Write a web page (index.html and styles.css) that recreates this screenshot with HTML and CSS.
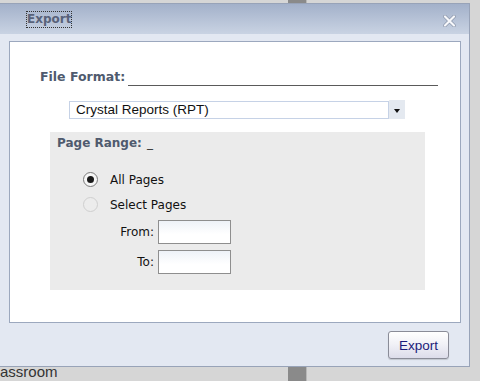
FILE: index.html
```html
<!DOCTYPE html>
<html lang="en">
<head>
  <meta charset="UTF-8" />
  <title>Export</title>
  <link rel="stylesheet" href="styles.css">
</head>
<body>
  <div class="desk">
    <div class="desk-bar"></div>
    <div class="desk-text">assroom</div>

    <div class="dialog">
      <div class="titlebar">
        <span class="title">Export</span>
        <svg class="close" width="13" height="12" viewBox="0 0 13 12">
          <path d="M2 1.5 L11 10.5 M11 1.5 L2 10.5" stroke="#8c97ab" stroke-width="3.6" stroke-linecap="round" />
          <path d="M2 1.5 L11 10.5 M11 1.5 L2 10.5" stroke="#f7f8fb" stroke-width="2.2" stroke-linecap="round" />
        </svg>
      </div>
      <div class="dialog-body">
        <div class="panel">
          <div class="format-row">
            <span class="label">File Format:</span>
            <span class="rule"></span>
          </div>
          <div class="combo">
            <div class="combo-text">Crystal Reports (RPT)</div>
            <div class="combo-btn"><span class="arrow"></span></div>
          </div>
          <div class="range">
            <div class="range-head"><span class="label">Page Range:</span> <span class="blank">_</span></div>
            <div class="options">
              <label class="opt"><span class="radio on"></span>All Pages</label>
              <label class="opt off"><span class="radio"></span>Select Pages</label>
              <div class="field first"><span class="field-label">From:</span><span class="box"></span></div>
              <div class="field"><span class="field-label">To:</span><span class="box"></span></div>
            </div>
          </div>
        </div>
        <div class="actions">
          <button class="btn">Export</button>
        </div>
      </div>
    </div>
  </div>
</body>
</html>
```

FILE: styles.css
```css
body {
  margin: 0;
  background: #d6d6d6;
  font-family: "DejaVu Sans", Verdana, sans-serif;
}
.desk {
  position: relative;
  width: 480px;
  height: 381px;
  overflow: hidden;
  background: #d6d6d6;
}
.desk-bar {
  position: absolute;
  left: 288px;
  top: 0;
  width: 18px;
  height: 381px;
  background: #8a8a8a;
  border-right: 1px solid #b8b8b8;
}
.desk-text {
  position: absolute;
  left: 0;
  top: 364px;
  font-family: "Liberation Sans", Arial, sans-serif;
  font-size: 15px;
  line-height: 16px;
  color: #333;
}
.dialog {
  position: absolute;
  left: -1px;
  top: 3px;
  width: 469px;
  height: 362px;
  border: 1px solid #98a3b8;
  background: #e3e8f2;
  display: flex;
  flex-direction: column;
}
.titlebar {
  height: 30px;
  flex: none;
  background: linear-gradient(#a3b1ca, #c9d3e3);
  display: flex;
  align-items: center;
  justify-content: space-between;
  padding: 0 13px 0 27px;
}
.title {
  font-weight: bold;
  font-size: 12px;
  color: #58627a;
  outline: 1px dotted #333;
  outline-offset: 0;
  line-height: 15px;
  margin-top: 1px;
}
.close {
  display: block;
  margin-top: 3px;
}
.dialog-body {
  flex: 1;
  padding: 7px 8px 0 9px;
  display: flex;
  flex-direction: column;
}
.panel {
  height: 280px;
  background: #fff;
  border: 1px solid #9ca8be;
}
.format-row {
  display: flex;
  align-items: flex-end;
  margin: 27px 0 0 30px;
}
.label {
  font-weight: bold;
  font-size: 12px;
  color: #4f5a6e;
}
.format-row .label {
  font-size: 12.5px;
}
.rule {
  width: 310px;
  margin-left: 3px;
  border-bottom: 1px solid #5a5a5a;
  margin-bottom: -2px;
}
.combo {
  display: flex;
  margin: 16px 0 0 59px;
}
.combo-text {
  width: 312px;
  height: 16px;
  border: 1px solid #c6d2e6;
  padding-left: 6px;
  font-family: "Liberation Sans", Arial, sans-serif;
  font-size: 13.5px;
  line-height: 16px;
  color: #111;
  margin-top: 1px;
}
.combo-btn {
  width: 16px;
  height: 19px;
  background: #e4e9f0;
  display: flex;
  align-items: center;
  justify-content: center;
}
.arrow {
  width: 0;
  height: 0;
  border-left: 3.5px solid transparent;
  border-right: 3.5px solid transparent;
  border-top: 4px solid #111;
  margin-top: 3px;
}
.range {
  width: 368px;
  height: 158px;
  margin: 13px 0 0 40px;
  background: #ebebeb;
  padding: 0 0 0 7px;
}
.blank {
  font-size: 12px;
  color: #333;
}
.options {
  margin: 16px 0 0 26px;
  font-size: 12px;
  color: #111;
}
.opt {
  display: flex;
  align-items: center;
  height: 25px;
}
.radio {
  box-sizing: border-box;
  width: 15px;
  height: 15px;
  border-radius: 50%;
  border: 1px solid #7a7a7a;
  background: #f6f6f6;
  margin-right: 12px;
  position: relative;
}
.radio.on::after {
  content: "";
  position: absolute;
  left: 3px;
  top: 3px;
  width: 7px;
  height: 7px;
  border-radius: 50%;
  background: #1a1a1a;
}
.opt.off .radio {
  border-color: #cfcfcf;
  background: #ececec;
}
.field {
  display: flex;
  align-items: center;
  margin-top: 6px;
}
.field.first {
  margin-top: 3px;
}
.field-label {
  width: 71px;
  text-align: right;
  margin-right: 4px;
}
.box {
  box-sizing: border-box;
  width: 73px;
  height: 24px;
  border: 1px solid #8e8e8e;
  background: linear-gradient(#eef2f8, #ffffff 60%);
}
.actions {
  display: flex;
  justify-content: flex-end;
  padding: 8px 12px 0 0;
}
.btn {
  width: 61px;
  height: 28px;
  border: 1px solid #8a8c98;
  border-radius: 3px;
  background: linear-gradient(#ffffff, #f0f0f6 50%, #dcdcea);
  box-shadow: 0 1px 1px rgba(0, 0, 0, 0.15);
  font-family: "Liberation Sans", Arial, sans-serif;
  font-size: 13.5px;
  color: #1c1c7a;
  padding: 0;
}
```
